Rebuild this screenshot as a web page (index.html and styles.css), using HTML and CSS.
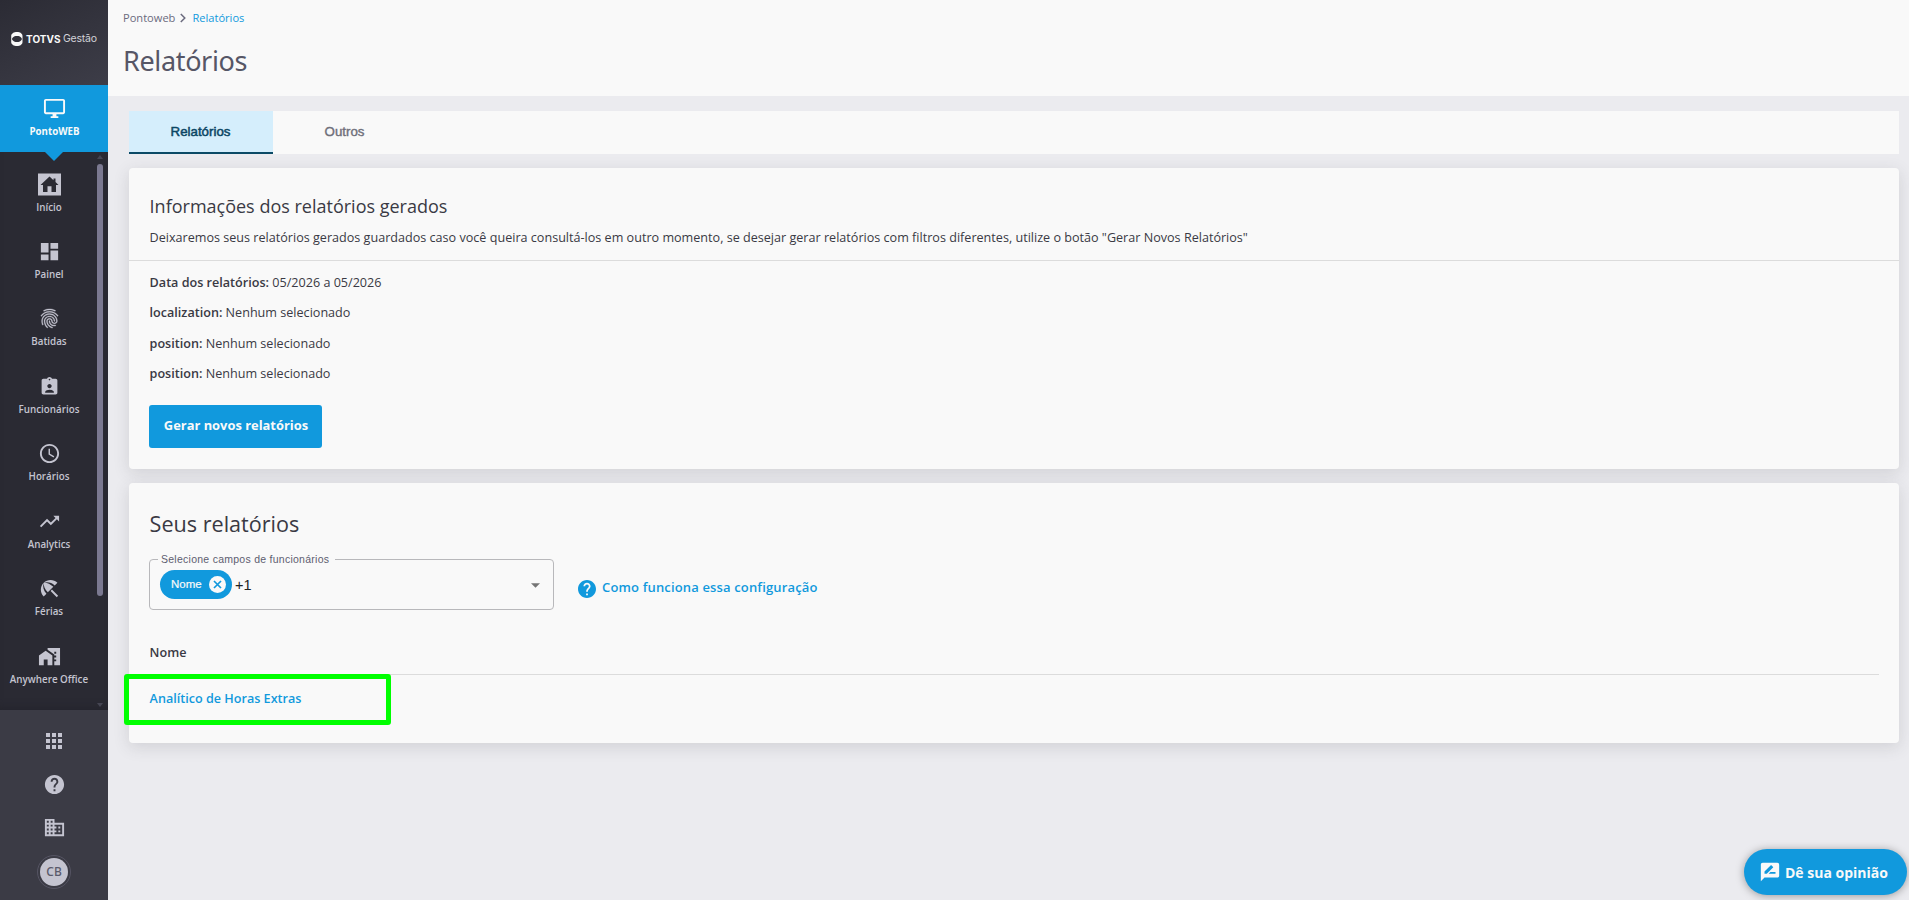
FILE: index.html
```html
<!DOCTYPE html>
<html lang="pt-BR">
<head>
<meta charset="utf-8">
<title>Relatórios</title>
<link rel="stylesheet" href="styles.css">
</head>
<body>
<div class="app">
  <aside class="sidebar">
    <div class="logo">
      <svg class="logo-mark" viewBox="0 0 12 14" width="12" height="14"><path fill="#f9f9f9" fill-rule="evenodd" d="M6 0C9 0 11.500 1.500 11.500 4V10C11.500 12.500 9 14 6 14C3 14 .2 12.500 .2 10V4C.2 1.500 3 0 6 0ZM.8 7C2 9.500 4 10 6 10S10 9.500 11 7C10 4.500 8 4 6 4S2 4.500 .8 7Z"/></svg>
      <span class="logo-brand">TOTVS</span><span class="logo-sub">Gestão</span>
    </div>
    <a class="product">
      <svg class="icon" viewBox="0 0 24 24" width="23" height="23"><path d="M21 2H3c-1.100 0-2 .9-2 2v12c0 1.100.9 2 2 2h7v2H8v2h8v-2h-2v-2h7c1.100 0 2-.9 2-2V4c0-1.100-.9-2-2-2zm0 14H3V4h18v12z"/></svg>
      <span>PontoWEB</span>
    </a>
    <div class="nav-area">
      <nav class="nav">
        <a class="nav-item"><svg class="icon" viewBox="0 0 23 22" width="23" height="22"><path fill-rule="evenodd" d="M0 0H23V22H0ZM11.500 3L2.500 11.500H5V18.500H9.500V12.800H13.500V18.500H18V11.500H20.500L17.500 8.600V5H15.500V6.700Z"/></svg><span>Início</span></a>
        <a class="nav-item"><svg class="icon" viewBox="0 0 24 24" width="23" height="23"><path d="M3 13h8V3H3v10zm0 8h8v-6H3v6zm10 0h8V11h-8v10zm0-18v6h8V3h-8z"/></svg><span>Painel</span></a>
        <a class="nav-item"><svg class="icon" viewBox="0 0 24 24" width="23" height="23"><path stroke="#c4c4d0" stroke-width=".35" d="M17.810 4.470c-.08 0-.16-.02-.23-.06C15.660 3.420 14 3 12.010 3c-1.980 0-3.860.47-5.570 1.410-.24.130-.54.040-.68-.2-.13-.24-.04-.55.200-.68C7.820 2.520 9.860 2 12.010 2c2.130 0 3.990.47 6.030 1.520.25.130.34.430.21.670-.09.180-.26.280-.44.280zM3.500 9.720c-.1 0-.2-.03-.29-.09-.23-.16-.28-.47-.12-.7.990-1.400 2.250-2.500 3.750-3.270C9.980 4.040 14 4.030 17.150 5.650c1.500.77 2.760 1.860 3.750 3.250.16.220.11.540-.12.700-.23.160-.54.110-.7-.12-.9-1.260-2.040-2.250-3.390-2.940-2.870-1.470-6.540-1.470-9.400.010-1.360.7-2.500 1.700-3.400 2.960-.08.140-.23.210-.39.210zm6.250 12.070c-.13 0-.26-.05-.35-.15-.87-.87-1.340-1.430-2.010-2.640-.69-1.230-1.050-2.730-1.050-4.340 0-2.970 2.540-5.390 5.660-5.390s5.660 2.420 5.660 5.390c0 .28-.22.500-.5.500s-.5-.22-.5-.5c0-2.420-2.090-4.390-4.660-4.390s-4.660 1.970-4.660 4.390c0 1.440.32 2.770.93 3.850.64 1.150 1.080 1.640 1.850 2.420.19.200.19.510 0 .71-.11.100-.24.150-.37.150zm7.170-1.850c-1.190 0-2.240-.3-3.100-.89-1.490-1.010-2.380-2.650-2.380-4.390 0-.28.220-.5.500-.5s.5.220.5.500c0 1.410.72 2.740 1.940 3.560.71.480 1.540.71 2.540.71.240 0 .64-.03 1.040-.1.270-.05.530.13.580.41.050.27-.13.530-.41.580-.57.110-1.070.12-1.210.12zM14.910 22c-.04 0-.09-.01-.13-.02-1.590-.44-2.630-1.030-3.720-2.100-1.400-1.390-2.170-3.240-2.170-5.220 0-1.620 1.380-2.940 3.080-2.940s3.080 1.320 3.080 2.940c0 1.070.93 1.940 2.080 1.940s2.080-.87 2.080-1.940c0-3.770-3.250-6.830-7.250-6.830-2.840 0-5.440 1.580-6.610 4.030-.39.810-.59 1.760-.59 2.800 0 .78.070 2.010.67 3.610.1.260-.03.550-.29.640-.26.100-.55-.04-.64-.29-.49-1.310-.73-2.610-.73-3.960 0-1.200.23-2.290.68-3.240 1.330-2.790 4.280-4.600 7.510-4.600 4.550 0 8.250 3.510 8.250 7.830 0 1.620-1.380 2.940-3.080 2.940s-3.080-1.320-3.080-2.940c0-1.070-.93-1.940-2.080-1.940s-2.080.87-2.080 1.940c0 1.710.66 3.310 1.870 4.510.95.940 1.860 1.460 3.270 1.850.27.070.42.350.35.610-.05.230-.26.380-.47.380z"/></svg><span>Batidas</span></a>
        <a class="nav-item"><svg class="icon" viewBox="0 0 24 24" width="21" height="22"><path d="M19 3h-4.180C14.400 1.840 13.300 1 12 1c-1.300 0-2.400.84-2.820 2H5c-1.100 0-2 .9-2 2v14c0 1.100.9 2 2 2h14c1.100 0 2-.9 2-2V5c0-1.100-.9-2-2-2zm-7 0c.55 0 1 .45 1 1s-.45 1-1 1-1-.45-1-1 .45-1 1-1zm0 6c1.380 0 2.500 1.120 2.500 2.500s-1.120 2.500-2.500 2.500-2.500-1.120-2.500-2.500 1.120-2.500 2.500-2.500zm5 10H7v-.6c0-1.700 3.300-2.600 5-2.600s5 .9 5 2.600V19z"/></svg><span>Funcionários</span></a>
        <a class="nav-item"><svg class="icon" viewBox="0 0 24 24" width="23" height="23"><path d="M11.990 2C6.470 2 2 6.480 2 12s4.470 10 9.990 10C17.520 22 22 17.520 22 12S17.520 2 11.990 2zM12 20c-4.420 0-8-3.580-8-8s3.580-8 8-8 8 3.580 8 8-3.580 8-8 8zm.5-13H11v6l5.250 3.150.75-1.230-4.500-2.670z"/></svg><span>Horários</span></a>
        <a class="nav-item"><svg class="icon" viewBox="0 0 24 24" width="23" height="23"><path d="M16 6l2.290 2.290-4.880 4.880-4-4L2 16.590 3.410 18l6-6 4 4 6.300-6.290L22 12V6z"/></svg><span>Analytics</span></a>
        <a class="nav-item"><svg class="icon" viewBox="0 0 24 24" width="23" height="23"><path d="M13.127 14.560l1.430-1.430 6.440 6.443L19.570 21zm4.293-5.730l2.860-2.860c-3.950-3.950-10.350-3.960-14.300-.02 3.930-1.300 8.310-.25 11.440 2.880zM5.950 5.980c-3.940 3.950-3.930 10.350.02 14.300l2.860-2.860C5.700 14.290 4.650 9.910 5.950 5.980zm.020-.020l-.010.010c-.38 3.010 1.170 6.880 4.300 10.020l5.730-5.730c-3.130-3.130-7.010-4.680-10.020-4.300z"/></svg><span>Férias</span></a>
        <a class="nav-item"><svg class="icon" viewBox="0 0 24 24" width="23" height="23"><path fill-rule="evenodd" d="M1 11v10h5v-6h4v6h5V11L8 6zM10 3v1.970l7 5V11h2v2h-2v2h2v2h-2v4h6V3H10zm9 6h-2V7h2v2z"/></svg><span>Anywhere Office</span></a>
      </nav>
      <div class="scroll">
        <svg viewBox="0 0 6 4" width="6" height="4"><path fill="#464653" d="M3 0L6 4H0Z"/></svg>
        <div class="thumb"></div>
        <svg viewBox="0 0 6 4" width="6" height="4"><path fill="#464653" d="M0 0H6L3 4Z"/></svg>
      </div>
    </div>
    <div class="side-footer">
      <svg class="icon" viewBox="0 0 24 24" width="24" height="24"><path d="M4 8h4V4H4v4zm6 12h4v-4h-4v4zm-6 0h4v-4H4v4zm0-6h4v-4H4v4zm6 0h4v-4h-4v4zm6-10v4h4V4h-4zm-6 4h4V4h-4v4zm6 6h4v-4h-4v4zm0 6h4v-4h-4v4z"/></svg>
      <svg class="icon" viewBox="0 0 24 24" width="23" height="23"><path d="M12 2C6.480 2 2 6.480 2 12s4.480 10 10 10 10-4.480 10-10S17.520 2 12 2zm1 17h-2v-2h2v2zm2.070-7.750l-.9.920C13.450 12.900 13 13.500 13 15h-2v-.5c0-1.100.45-2.100 1.170-2.830l1.240-1.260c.37-.36.590-.86.590-1.410 0-1.100-.9-2-2-2s-2 .9-2 2H8c0-2.210 1.790-4 4-4s4 1.790 4 4c0 .88-.36 1.680-.93 2.250z"/></svg>
      <svg class="icon" viewBox="0 0 24 24" width="23" height="23"><path d="M12 7V3H2v18h20V7H12zM6 19H4v-2h2v2zm0-4H4v-2h2v2zm0-4H4V9h2v2zm0-4H4V5h2v2zm4 12H8v-2h2v2zm0-4H8v-2h2v2zm0-4H8V9h2v2zm0-4H8V5h2v2zm10 12h-8v-2h2v-2h-2v-2h2v-2h-2V9h8v10zm-2-8h-2v2h2v-2zm0 4h-2v2h2v-2z"/></svg>
      <div class="avatar"><span>CB</span></div>
    </div>
  </aside>
  <main class="main">
    <header class="page-head">
      <div class="crumbs"><span>Pontoweb</span><svg viewBox="0 0 6 10" width="6" height="10"><path d="M.8 1L4.800 5L.8 9" fill="none" stroke="#6b6b7e" stroke-width="1.500"/></svg><a>Relatórios</a></div>
      <h1>Relatórios</h1>
    </header>
    <div class="content">
      <div class="tabs"><a class="tab active">Relatórios</a><a class="tab">Outros</a></div>
      <section class="card info">
        <div class="info-head">
          <h2>Informações dos relatórios gerados</h2>
          <p class="desc">Deixaremos seus relatórios gerados guardados caso você queira consultá-los em outro momento, se desejar gerar relatórios com filtros diferentes, utilize o botão "Gerar Novos Relatórios"</p>
        </div>
        <div class="info-body">
          <p><b>Data dos relatórios:</b> 05/2026 a 05/2026</p>
          <p><b>localization:</b> Nenhum selecionado</p>
          <p><b>position:</b> Nenhum selecionado</p>
          <p><b>position:</b> Nenhum selecionado</p>
          <button class="primary">Gerar novos relatórios</button>
        </div>
      </section>
      <section class="card reports">
        <h2 class="big">Seus relatórios</h2>
        <div class="filters">
          <div class="select">
            <span class="select-label">Selecione campos de funcionários</span>
            <span class="chip"><span>Nome</span><svg viewBox="0 0 16 16" width="17" height="17"><circle cx="8" cy="8" r="8" fill="#f9f9f9"/><path d="M4.700 4.700L11.300 11.300M11.300 4.700L4.700 11.300" stroke="#1199dd" stroke-width="1.600"/></svg></span>
            <span class="more">+1</span>
            <svg class="caret" viewBox="0 0 10 5" width="9" height="5"><path fill="#757575" d="M0 0H10L5 5Z"/></svg>
          </div>
          <a class="help"><svg viewBox="2 2 20 20" width="18" height="18"><path fill="#1199dd" d="M12 2C6.480 2 2 6.480 2 12s4.480 10 10 10 10-4.480 10-10S17.520 2 12 2zm1 17h-2v-2h2v2zm2.070-7.750l-.9.920C13.450 12.900 13 13.500 13 15h-2v-.5c0-1.100.45-2.100 1.170-2.830l1.240-1.260c.37-.36.590-.86.590-1.410 0-1.100-.9-2-2-2s-2 .9-2 2H8c0-2.210 1.790-4 4-4s4 1.790 4 4c0 .88-.36 1.680-.93 2.250z"/></svg><span>Como funciona essa configuração</span></a>
        </div>
        <div class="table">
          <div class="th">Nome</div>
          <div class="td"><a>Analítico de Horas Extras</a><div class="highlight"></div></div>
        </div>
      </section>
    </div>
  </main>
  <button class="feedback"><svg viewBox="0 0 24 24" width="22" height="22"><path fill="#f9f9f9" fill-rule="evenodd" d="M20 2H4c-1.100 0-1.990.9-1.990 2L2 22l4-4h14c1.100 0 2-.9 2-2V4c0-1.100-.9-2-2-2zM6 14v-2.470l6.880-6.880c.2-.2.510-.2.710 0l1.770 1.770c.2.200.2.510 0 .71L8.470 14H6zm12 0h-7.500l2-2H18v2z"/></svg><span>Dê sua opinião</span></button>
</div>
</body>
</html>
```
FILE: styles.css
```css
* { box-sizing: border-box; }
body { margin: 0; font-family: "Open Sans", "Noto Sans", sans-serif; color: #3a3a44; background: #ebebef; }
h1, h2, p { margin: 0; font-weight: 400; }
button { border: 0; font-family: inherit; color: #f9f9f9; background: #1199dd; }
.app { display: flex; width: 1909px; height: 900px; overflow: hidden; }

.sidebar { width: 108px; flex: none; display: flex; flex-direction: column; background: #3b3b45; }
.icon { fill: #c4c4d0; display: block; }
.logo { height: 85px; padding: 8px 0 16px 11px; display: flex; align-items: center; color: #f9f9f9; background: linear-gradient(155deg, #2b2b34, #3d3d48); white-space: nowrap; }
.logo-brand { font: 700 10px/14px Inter, sans-serif; margin-left: 3px; width: 37px; letter-spacing: .05px; }
.logo-sub { font: 400 10.5px/14px Inter, sans-serif; letter-spacing: -0.25px; color: #d2d2d9; }
.product { position: relative; height: 67px; display: flex; flex-direction: column; align-items: center; padding: 12px 0 0 1px; color: #f9f9f9; background: #1199dd; font-weight: 700; font-size: 9.700px; line-height: 14px; }
.product .icon { fill: #f9f9f9; }
.product span { margin-top: 5px; }
.product::after { content: ""; position: absolute; top: 67px; left: 45px; border: 9px solid transparent; border-top-color: #1199dd; border-bottom: 0; }
.nav-area { height: 558px; display: flex; background: #2a2a33; box-shadow: inset 0 -8px 8px -6px #24242c; }
.nav { width: 97px; padding: 20.500px 0 0 1px; }
.nav-item { height: 67.450px; display: flex; flex-direction: column; align-items: center; color: #c4c4d0; font-size: 9.800px; font-weight: 600; line-height: 14px; white-space: nowrap; }
.nav-item .icon { height: 23px; }
.nav-item span { margin-top: 5px; }
.scroll { width: 6px; padding: 3px 0; display: flex; flex-direction: column; }
.thumb { height: 432px; margin: 5px 0 107px; border-radius: 3px; background: #7b7991; }
.side-footer { height: 190px; display: flex; flex-direction: column; align-items: center; padding: 19px 0 0; gap: 20px; }
.avatar { width: 34px; height: 34px; margin-top: -4px; padding: 2px; border: 1px solid #555463; border-radius: 50%; }
.avatar span { display: block; width: 28px; height: 28px; border-radius: 50%; background: #c4c4d0; color: #5a5a6b; text-align: center; font: 500 12px/28px "Noto Sans", sans-serif; }

.main { flex: 1; min-width: 0; }
.page-head { height: 96px; padding: 9px 15px 0; background: #f9f9f9; }
.crumbs { display: flex; align-items: center; font-size: 11.100px; line-height: 18px; color: #6b6b7e; }
.crumbs svg { margin: 0 6px 0 5px; }
.crumbs a { color: #1199dd; }
h1 { margin-top: 16px; font: 400 27px/36px "Noto Sans", sans-serif; letter-spacing: -.35px; color: #565666; }
.content { padding: 15px 10px 0 21px; }
.tabs { height: 43px; display: flex; background: #f9f9f9; }
.tab { width: 144px; padding-right: 1px; text-align: center; font: 400 13.300px/41px "Liberation Sans", sans-serif; color: #6f6f7a; -webkit-text-stroke: .4px; }
.tab.active { background: #d5eefc; color: #0b4664; border-bottom: 2px solid #0b4a66; -webkit-text-stroke: .5px; }
.card { margin-top: 14px; border-radius: 4px; background: #f9f9f9; box-shadow: 0 4px 16px rgba(58,58,68,.15); }
.info { height: 301px; }
.info-head { height: 93px; padding: 25px 20.600px 0; border-bottom: 1px solid #dcdcdc; }
h2 { font-size: 18px; line-height: 26px; }
.desc { margin-top: 9px; font-size: 12.600px; line-height: 20px; white-space: nowrap; }
.info-body { padding: 12px 20px 0; font-size: 12.600px; line-height: 20px; }
.info-body p { height: 30.400px; padding-left: .6px; }
.info-body b { font-weight: 600; }
.primary { display: block; margin-top: 10.400px; width: 173px; height: 43px; padding: 0 0 2px 1px; border-radius: 3px; font-size: 12.900px; font-weight: 700; }
.reports { height: 260px; padding: 26px 20px 0; }
.big { padding-left: .6px; font-size: 21.600px; line-height: 30px; }
.filters { display: flex; margin-top: 20px; }
.select { position: relative; width: 405px; height: 51px; padding: 10px 13px 10px 10px; display: flex; align-items: flex-start; border: 1px solid #b8b8bb; border-radius: 4px; font-family: "Liberation Sans", sans-serif; }
.select-label { position: absolute; top: -8px; left: 8px; padding: 0 6px 0 3px; background: #f9f9f9; font-size: 10.500px; line-height: 15px; letter-spacing: .26px; color: #5d5d70; white-space: nowrap; }
.chip { display: flex; align-items: center; justify-content: space-between; width: 72px; height: 29px; padding: 0 6px 1px 11px; border-radius: 15px; background: #1199dd; color: #f9f9f9; font-size: 11.500px; -webkit-text-stroke: .2px; }
.more { margin-left: 3px; font-size: 14.500px; line-height: 30px; color: #222; }
.caret { margin: 13px 0 0 auto; }
.help { display: flex; align-items: center; margin: 9px 0 0 24px; height: 42px; color: #1199dd; font-size: 13px; font-weight: 600; letter-spacing: .15px; }
.help span { margin: -4px 0 0 6px; }
.table { margin: 27px 0 0; font-size: 12.600px; font-weight: 600; }
.th { height: 38px; padding-left: .6px; line-height: 32px; border-bottom: 1px solid #dcdcdc; }
.td { position: relative; padding-left: .6px; line-height: 48px; color: #1199dd; }
.highlight { position: absolute; left: -25px; top: -1px; width: 267px; height: 51px; border: 5px solid #0f0; border-radius: 3px; }
.feedback { position: absolute; left: 1744px; top: 849px; width: 163px; height: 46px; padding: 0 0 0 15px; display: flex; align-items: center; border-radius: 23px; box-shadow: 0 1px 8px rgba(0,0,0,.35); font-size: 14px; font-weight: 700; white-space: nowrap; }
.feedback span { margin-left: 4px; }
```
